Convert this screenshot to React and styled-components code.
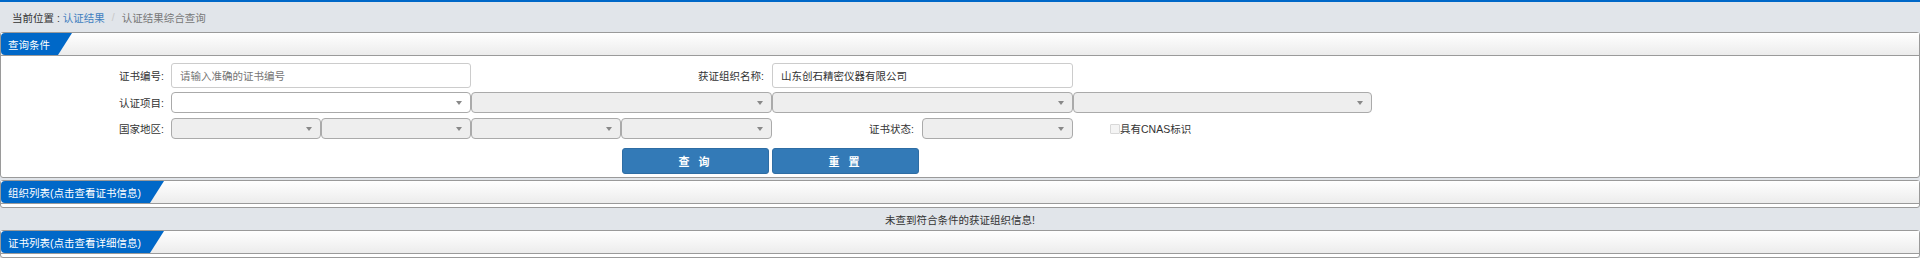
import React from 'react';
import styled, { createGlobalStyle } from 'styled-components';

const BLUE = '#0068c8';
const PAGE_BG = '#e1e5ea';
const BORDER = '#9a9a9a';
const TEXT = '#333333';

const GlobalStyle = createGlobalStyle`
	body {
		margin: 0;
		background: ${PAGE_BG};
		font-family: 'Liberation Sans', 'Noto Sans CJK SC', sans-serif;
		font-size: 10.5px;
		color: ${TEXT};
	}
`;

export default function App() {
	return (
		<Page>
			<GlobalStyle />
			<TopLine />
			<Breadcrumb>
				<Crumb>当前位置 : </Crumb>
				<CrumbLink>认证结果</CrumbLink>
				<Divider>/</Divider>
				<CrumbActive>认证结果综合查询</CrumbActive>
			</Breadcrumb>

			<Panel>
				<PanelHeader>
					<Tab width={71}>查询条件</Tab>
				</PanelHeader>
				<FormBody>
					<FormRow spacing={4}>
						<Label>证书编号:</Label>
						<TextInput width={300} placeholder="请输入准确的证书编号" />
						<InlineLabel width={301}>获证组织名称:</InlineLabel>
						<TextInput width={301} defaultValue="山东创石精密仪器有限公司" />
					</FormRow>
					<FormRow spacing={5}>
						<Label>认证项目:</Label>
						<Select width={300} />
						<Select width={301} disabled />
						<Select width={301} disabled />
						<Select width={299} disabled />
					</FormRow>
					<FormRow spacing={0}>
						<Label>国家地区:</Label>
						<Select width={150} disabled />
						<Select width={150} disabled />
						<Select width={150} disabled />
						<Select width={151} disabled />
						<InlineLabel width={150}>证书状态:</InlineLabel>
						<Select width={151} disabled />
						<CheckLabel>
							<CheckBox />
							具有CNAS标识
						</CheckLabel>
					</FormRow>
					<ButtonRow>
						<PrimaryButton>查 询</PrimaryButton>
						<PrimaryButton>重 置</PrimaryButton>
					</ButtonRow>
				</FormBody>
			</Panel>

			<Panel>
				<PanelHeader>
					<Tab width={163}>组织列表(点击查看证书信息)</Tab>
				</PanelHeader>
				<EmptyBody />
			</Panel>
			<Message>未查到符合条件的获证组织信息!</Message>

			<Panel>
				<PanelHeader>
					<Tab width={163}>证书列表(点击查看详细信息)</Tab>
				</PanelHeader>
				<EmptyBody />
			</Panel>
		</Page>
	);
}

function Select({ width, disabled }) {
	return (
		<SelectBox width={width} disabled={disabled}>
			<Caret />
		</SelectBox>
	);
}

const Page = styled.div`
	width: 1920px;
	min-height: 258px;
	background: ${PAGE_BG};
`;

const TopLine = styled.div`
	height: 2px;
	background: ${BLUE};
`;

const Breadcrumb = styled.div`
	height: 30px;
	display: flex;
	align-items: center;
	padding-left: 12px;
	font-size: 10.5px;
`;
const Crumb = styled.span`
	color: ${TEXT};
	white-space: pre;
`;
const CrumbLink = styled.span`
	color: #3f7fbf;
`;
const Divider = styled.span`
	color: #c8c8c8;
	padding: 0 7px;
`;
const CrumbActive = styled.span`
	color: #777777;
`;

const Panel = styled.div`
	border: 1px solid ${BORDER};
	border-radius: 3px;
	background: #ffffff;
	& + & {
		margin-top: 2px;
	}
`;

const PanelHeader = styled.div`
	height: 22px;
	background: linear-gradient(to bottom, #ffffff 0%, #ececec 100%);
	border-bottom: 1px solid ${BORDER};
	display: flex;
	align-items: stretch;
`;

const Tab = styled.div`
	width: ${(props) => props.width}px;
	background: ${BLUE};
	color: #ffffff;
	font-size: 10.5px;
	display: flex;
	align-items: center;
	padding-left: 7px;
	box-sizing: border-box;
	border-radius: 4px 0 0 4px;
	clip-path: polygon(0 0, 100% 0, calc(100% - 14px) 100%, 0 100%);
	white-space: nowrap;
`;

const FormBody = styled.div`
	padding: 7px 0 3px 0;
	display: flex;
	flex-direction: column;
`;

const FormRow = styled.div`
	display: flex;
	align-items: center;
	margin-bottom: ${(props) => props.spacing}px;
`;

const Label = styled.div`
	width: 170px;
	box-sizing: border-box;
	padding-right: 7px;
	text-align: right;
	font-size: 10.5px;
	color: ${TEXT};
`;

const InlineLabel = styled.div`
	width: ${(props) => props.width}px;
	box-sizing: border-box;
	padding-right: 8px;
	text-align: right;
	font-size: 10.5px;
	color: ${TEXT};
`;

const TextInput = styled.input`
	width: ${(props) => props.width}px;
	height: 25px;
	box-sizing: border-box;
	border: 1px solid #cccccc;
	border-radius: 3px;
	padding: 0 8px;
	font-family: inherit;
	font-size: 10.5px;
	color: ${TEXT};
	outline: none;
	::placeholder {
		color: #999999;
	}
`;

const SelectBox = styled.div`
	position: relative;
	width: ${(props) => props.width}px;
	height: 21px;
	box-sizing: border-box;
	border: 1px solid #aaaaaa;
	border-radius: 4px;
	background: ${(props) => (props.disabled ? '#eeeeee' : '#ffffff')};
`;

const Caret = styled.span`
	position: absolute;
	right: 8px;
	top: 8px;
	width: 0;
	height: 0;
	border-left: 3px solid transparent;
	border-right: 3px solid transparent;
	border-top: 4px solid #888888;
`;

const CheckLabel = styled.label`
	display: flex;
	align-items: center;
	margin-left: 37px;
	font-size: 10.5px;
	color: ${TEXT};
`;

const CheckBox = styled.span`
	width: 8px;
	height: 8px;
	border: 1px solid #d8d8d8;
	background: #f4f4f4;
	border-radius: 1px;
`;

const ButtonRow = styled.div`
	display: flex;
	gap: 3px;
	margin-top: 9px;
	padding-left: 621px;
`;

const PrimaryButton = styled.button`
	width: 147px;
	height: 26px;
	background: #337ab7;
	border: 1px solid #2e6da4;
	border-radius: 3px;
	color: #ffffff;
	font-family: inherit;
	font-size: 11px;
	font-weight: bold;
	letter-spacing: 3px;
	padding: 0;
`;

const EmptyBody = styled.div`
	height: 3px;
`;

const Message = styled.div`
	height: 22px;
	display: flex;
	align-items: center;
	justify-content: center;
	font-size: 10.5px;
	color: ${TEXT};
`;
